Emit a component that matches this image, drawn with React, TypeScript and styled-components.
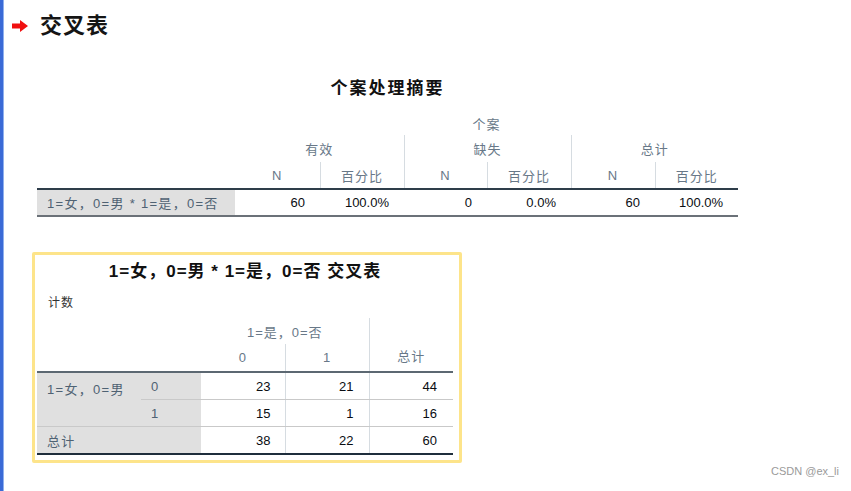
import React from "react";
import styled, { createGlobalStyle } from "styled-components";

const Global = createGlobalStyle`
  html, body { margin: 0; padding: 0; background: #ffffff; }
  body { font-family: "Liberation Sans", "Noto Sans CJK SC", sans-serif; }
`;

const Page = styled.div`
  position: relative;
  box-sizing: border-box;
  width: 851px;
  height: 491px;
  border-left: 3px solid #3a6ad6;
  box-shadow: inset 1px 0 0 #8fb0ee;
  overflow: hidden;
`;

const Header = styled.div`
  display: flex;
  align-items: center;
  gap: 12px;
  padding: 13px 0 0 9px;
  height: 26px;
`;

const MainTitle = styled.h1`
  margin: 0;
  font-family: "Liberation Serif", "Noto Sans CJK SC", serif;
  font-size: 22px;
  line-height: 26px;
  font-weight: 700;
  color: #151515;
  letter-spacing: 1px;
`;

const Section = styled.section<{ $left: number; $top: number }>`
  margin-left: ${(p) => p.$left}px;
  margin-top: ${(p) => p.$top}px;
`;

const TableTitle = styled.div<{ $width: number }>`
  width: ${(p) => p.$width}px;
  text-align: center;
  font-family: "Liberation Serif", "Noto Sans CJK SC", serif;
  font-size: 17px;
  line-height: 20px;
  font-weight: 700;
  letter-spacing: 2px;
  color: #111;
  margin-bottom: 13px;
`;

const Grid = styled.table<{ $width: number }>`
  width: ${(p) => p.$width}px;
  border-collapse: collapse;
  table-layout: fixed;
  font-size: 13px;
  font-family: "Liberation Sans", "Noto Sans CJK SC", sans-serif;
`;

const HeadCell = styled.th<{ $sep?: boolean; $h?: number; $bottom?: boolean }>`
  height: ${(p) => p.$h ?? 26}px;
  padding: 0;
  font-weight: 400;
  color: #687888;
  letter-spacing: 1px;
  text-align: center;
  vertical-align: ${(p) => (p.$bottom ? "bottom" : "middle")};
  ${(p) => (p.$bottom ? "padding-bottom: 6px;" : "")}
  border-left: ${(p) => (p.$sep ? "1px solid #d6dce1" : "none")};
`;

const BodyRow = styled.tr<{ $top?: string; $bottom?: string }>`
  ${(p) => (p.$top ? `border-top: 2px solid ${p.$top};` : "")}
  ${(p) => (p.$bottom ? `border-bottom: 2px solid ${p.$bottom};` : "")}
`;

const LabelCell = styled.th<{ $h?: number; $line?: boolean; $pad?: number; $top?: boolean }>`
  height: ${(p) => p.$h ?? 26}px;
  padding: ${(p) => (p.$top ? 6 : 0)}px 0 0 ${(p) => p.$pad ?? 10}px;
  background: #e0e0e0;
  color: #4f6273;
  font-weight: 400;
  text-align: left;
  vertical-align: ${(p) => (p.$top ? "top" : "middle")};
  letter-spacing: 1.3px;
  white-space: nowrap;
  ${(p) => (p.$line ? "border-bottom: 1px solid #c9c9c9;" : "")}
`;

const DataCell = styled.td<{ $sep?: boolean; $line?: boolean; $pad?: number }>`
  padding: 0 ${(p) => p.$pad ?? 15}px 0 0;
  text-align: right;
  color: #0a0d12;
  vertical-align: middle;
  border-left: ${(p) => (p.$sep ? "1px solid #d6dce1" : "none")};
  ${(p) => (p.$line ? "border-bottom: 1px solid #c9c9c9;" : "")}
`;

const Frame = styled.div`
  box-sizing: border-box;
  width: 430px;
  border: 3px solid #fde48a;
  border-radius: 2px;
  padding: 6px 6px 5px 2px;
`;

const CrossTitle = styled.div`
  text-align: center;
  font-family: "Liberation Sans", "Noto Sans CJK SC", sans-serif;
  font-size: 17px;
  line-height: 22px;
  font-weight: 700;
  color: #111;
  letter-spacing: 1px;
`;

const Note = styled.div`
  margin: 12px 0 7px 11px;
  font-size: 12px;
  line-height: 16px;
  color: #333;
  letter-spacing: 1px;
`;

const Watermark = styled.div`
  position: absolute;
  right: 12px;
  bottom: 14px;
  font-family: "Liberation Sans", sans-serif;
  font-size: 11px;
  color: #9a9a9a;
`;

const Arrow = () => (
  <svg width="16" height="12" viewBox="0 0 16 12" aria-hidden>
    <path d="M0 3.5 H8 V0 L16 6 L8 12 V8.5 H0 Z" fill="#f01010" />
  </svg>
);

const SummaryTable = () => (
  <Grid $width={701}>
    <colgroup>
      <col style={{ width: 198 }} />
      <col style={{ width: 85 }} />
      <col style={{ width: 84 }} />
      <col style={{ width: 83 }} />
      <col style={{ width: 84 }} />
      <col style={{ width: 84 }} />
      <col style={{ width: 83 }} />
    </colgroup>
    <thead>
      <tr>
        <HeadCell rowSpan={3} />
        <HeadCell colSpan={6} $h={23}>个案</HeadCell>
      </tr>
      <tr>
        <HeadCell colSpan={2} $h={27}>有效</HeadCell>
        <HeadCell colSpan={2} $h={27} $sep>缺失</HeadCell>
        <HeadCell colSpan={2} $h={27} $sep>总计</HeadCell>
      </tr>
      <tr>
        <HeadCell $h={26}>N</HeadCell>
        <HeadCell $h={26} $sep>百分比</HeadCell>
        <HeadCell $h={26} $sep>N</HeadCell>
        <HeadCell $h={26} $sep>百分比</HeadCell>
        <HeadCell $h={26} $sep>N</HeadCell>
        <HeadCell $h={26} $sep>百分比</HeadCell>
      </tr>
    </thead>
    <tbody>
      <BodyRow $top="#2e3d4a" $bottom="#6b7178">
        <LabelCell $h={25}>1=女，0=男 * 1=是，0=否</LabelCell>
        <DataCell>60</DataCell>
        <DataCell>100.0%</DataCell>
        <DataCell>0</DataCell>
        <DataCell>0.0%</DataCell>
        <DataCell>60</DataCell>
        <DataCell>100.0%</DataCell>
      </BodyRow>
    </tbody>
  </Grid>
);

const CrossTable = () => (
  <Grid $width={416}>
    <colgroup>
      <col style={{ width: 104 }} />
      <col style={{ width: 60 }} />
      <col style={{ width: 84 }} />
      <col style={{ width: 84 }} />
      <col style={{ width: 84 }} />
    </colgroup>
    <thead>
      <tr>
        <HeadCell colSpan={2} rowSpan={2} />
        <HeadCell colSpan={2} $h={26}>1=是，0=否</HeadCell>
        <HeadCell rowSpan={2} $sep $bottom>总计</HeadCell>
      </tr>
      <tr>
        <HeadCell $h={27}>0</HeadCell>
        <HeadCell $h={27} $sep>1</HeadCell>
      </tr>
    </thead>
    <tbody>
      <BodyRow $top="#5c6872">
        <LabelCell rowSpan={2} $pad={10} $line $top>
          1=女，0=男
        </LabelCell>
        <LabelCell $h={26} $line $pad={10}>0</LabelCell>
        <DataCell $line $pad={14}>23</DataCell>
        <DataCell $line $sep $pad={15}>21</DataCell>
        <DataCell $line $sep $pad={16}>44</DataCell>
      </BodyRow>
      <tr>
        <LabelCell $h={26} $line $pad={10}>1</LabelCell>
        <DataCell $line $pad={14}>15</DataCell>
        <DataCell $line $sep $pad={15}>1</DataCell>
        <DataCell $line $sep $pad={16}>16</DataCell>
      </tr>
      <BodyRow $bottom="#1f2e3c">
        <LabelCell colSpan={2} $h={26} $pad={10}>总计</LabelCell>
        <DataCell $pad={14}>38</DataCell>
        <DataCell $sep $pad={15}>22</DataCell>
        <DataCell $sep $pad={16}>60</DataCell>
      </BodyRow>
    </tbody>
  </Grid>
);

export default function App() {
  return (
    <>
      <Global />
      <Page>
        <Header>
          <Arrow />
          <MainTitle>交叉表</MainTitle>
        </Header>
        <Section $left={34} $top={40}>
          <TableTitle $width={701}>个案处理摘要</TableTitle>
          <SummaryTable />
        </Section>
        <Section $left={29} $top={35}>
          <Frame>
            <CrossTitle>1=女，0=男 * 1=是，0=否 交叉表</CrossTitle>
            <Note>计数</Note>
            <CrossTable />
          </Frame>
        </Section>
        <Watermark>CSDN @ex_li</Watermark>
      </Page>
    </>
  );
}
